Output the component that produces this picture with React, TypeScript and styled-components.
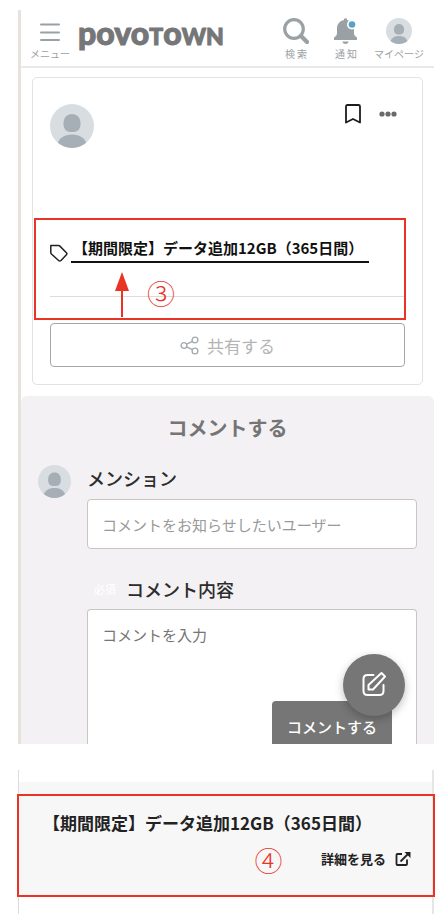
import React from 'react';
import styled, { createGlobalStyle } from 'styled-components';

const red = '#e93325';

const GlobalStyle = createGlobalStyle`
  * { box-sizing: border-box; }
  body {
    margin: 0;
    background: #fff;
    color: #222;
    font-family: "Noto Sans CJK JP", "Noto Sans", sans-serif;
  }
  button, input, textarea { font-family: inherit; }
  button { cursor: pointer; }
`;

const Page = styled.main`
  display: flex;
  flex-direction: column;
  gap: 26px;
  padding: 10px 12px 0 18px;
`;

const Screen = styled.section`
  border-left: 3px solid #e5e3dc;
`;

const Header = styled.header`
  display: flex;
  align-items: flex-start;
  height: 58px;
  padding: 8px 10px 0 8px;
  border-bottom: 2px solid #e9e9e9;
`;

const NavButton = styled.button<{ $width: number }>`
  display: flex;
  flex-direction: column;
  align-items: center;
  gap: 3px;
  width: ${p => p.$width}px;
  padding: 0;
  border: 0;
  background: none;
  color: #9aa1a5;
  font-size: 10px;
  line-height: 14px;
  white-space: nowrap;
`;

const Nav = styled.nav`
  display: flex;
  gap: 6px;
  margin-left: auto;
`;

const Logo = styled.a`
  display: flex;
  align-items: baseline;
  margin-left: 7px;
  color: #757678;
  font-family: Lato, sans-serif;
  font-size: 32px;
  font-weight: 900;
  line-height: 30px;
  text-decoration: none;
  -webkit-text-stroke: 1px #757678;
`;

const LogoCaps = styled.span`
  font-size: 23px;
`;

const Card = styled.article`
  margin: 9px 11px 11px;
  padding: 26px 17px 17px;
  border: 1px solid #e2e2e2;
  border-radius: 5px;
`;

const CardTop = styled.div`
  display: flex;
  align-items: flex-start;
  height: 139px;
`;

const CardActions = styled.div`
  display: flex;
  align-items: center;
  gap: 18px;
  margin: 0 8px 0 auto;
`;

const IconButton = styled.button`
  display: flex;
  padding: 0;
  border: 0;
  background: none;
`;

const TagRow = styled.div`
  position: relative;
  display: flex;
  align-items: flex-end;
  gap: 3px;
  height: 54px;
  padding-bottom: 33px;
  border-bottom: 1px solid #dcdcdc;
`;

const TagLink = styled.a`
  padding: 0 6px 0 2px;
  border-bottom: 2px solid #111;
  color: #111;
  font-size: 15px;
  font-weight: 700;
  line-height: 26px;
  white-space: nowrap;
  text-decoration: none;
`;

const TagFrame = styled.div`
  position: absolute;
  inset: -25px -1px -24px -16px;
  border: 2px solid ${red};
  pointer-events: none;
`;

const Marker = styled.span<{ $left: string; $top: number }>`
  position: absolute;
  left: ${p => p.$left};
  top: ${p => p.$top}px;
  color: ${red};
  font-size: 28px;
  font-weight: 300;
  line-height: 32px;
`;

const ArrowUp = styled.svg`
  position: absolute;
  left: 64px;
  top: 27px;
`;

const ShareButton = styled.button`
  display: flex;
  align-items: center;
  justify-content: center;
  gap: 8px;
  width: 100%;
  height: 44px;
  margin-top: 26px;
  border: 1px solid #a6a6a6;
  border-radius: 4px;
  background: #fff;
  color: #b5b5b5;
  font-size: 17px;
`;

const Comments = styled.section`
  padding: 18px 17px 0;
  border-radius: 6px 6px 0 0;
  background: #f3f1f3;
`;

const Title = styled.h2`
  margin: 0 0 22px;
  color: #757575;
  font-size: 20px;
  font-weight: 700;
  line-height: 28px;
  text-align: center;
`;

const FormRow = styled.div`
  display: flex;
  align-items: flex-start;
  gap: 16px;
  padding-top: 1px;
`;

const Form = styled.form`
  position: relative;
  flex: 1;
  min-width: 0;
`;

const Label = styled.label`
  display: flex;
  align-items: center;
  gap: 10px;
  color: #2c2c2c;
  font-size: 18px;
  font-weight: 500;
  line-height: 26px;
`;

const Required = styled.span`
  padding-left: 7px;
  color: #fff;
  font-size: 11px;
`;

const TextInput = styled.input`
  display: block;
  width: 100%;
  height: 50px;
  margin: 8px 0 27px;
  padding: 0 14px;
  border: 1px solid #c9c6c2;
  border-radius: 4px;
  background: #fff;
  font-size: 15px;
  &::placeholder { color: #999; }
`;

const TextArea = styled.textarea`
  display: block;
  width: 100%;
  height: 135px;
  margin-top: 7px;
  padding: 13px 14px;
  border: 1px solid #c9c6c2;
  border-bottom: 0;
  border-radius: 4px 4px 0 0;
  background: #fff;
  font-size: 15px;
  line-height: 24px;
  resize: none;
  &::placeholder { color: #757575; }
`;

const Submit = styled.button`
  position: absolute;
  right: 25px;
  bottom: 0;
  height: 43px;
  padding: 8px 15px 0;
  border: 0;
  border-radius: 4px 4px 0 0;
  background: #767676;
  color: #fff;
  font-size: 15px;
  font-weight: 500;
  line-height: 26px;
`;

const Compose = styled.button`
  position: absolute;
  right: 12px;
  bottom: 28px;
  display: flex;
  align-items: center;
  justify-content: center;
  width: 62px;
  height: 62px;
  padding: 0 0 2px;
  border: 0;
  border-radius: 50%;
  background: #767676;
  box-shadow: 0 3px 8px rgba(0, 0, 0, 0.25);
`;

const DetailScreen = styled.section`
  position: relative;
  padding: 12px 0 18px;
  border-left: 1px solid #dcdcdc;
  border-right: 2px solid #e6e6e6;
`;

const DetailPanel = styled.div`
  padding: 27px 21px 27px 24px;
  background: #f7f7f7;
`;

const DetailTitle = styled.h3`
  margin: 0;
  font-size: 17px;
  font-weight: 700;
  line-height: 28px;
  white-space: nowrap;
`;

const DetailLink = styled.a`
  display: flex;
  align-items: center;
  justify-content: flex-end;
  gap: 9px;
  margin-top: 12px;
  color: #222;
  font-size: 13px;
  font-weight: 700;
  line-height: 20px;
  text-decoration: none;
`;

const DetailFrame = styled.div`
  position: absolute;
  inset: 24px -3px 17px -2px;
  border: 2px solid ${red};
  pointer-events: none;
`;

function Avatar({ size }: { size: number }) {
  const id = `avatar-${size}`;
  return (
    <svg width={size} height={size} viewBox="0 0 44 44" aria-hidden="true">
      <clipPath id={id}><circle cx="22" cy="22" r="22" /></clipPath>
      <g clipPath={`url(#${id})`}>
        <rect width="44" height="44" fill="#d7dde0" />
        <path d="M22 10c5 0 8.500 3.500 8.500 9.500S28 28 22 28s-8.500-2.500-8.500-8.500S17 10 22 10z" fill="#a7afb6" />
        <path d="M7 41c2-7 7-10.500 15-10.500S35 34 37 41v3H7z" fill="#a7afb6" />
      </g>
    </svg>
  );
}

const MenuIcon = () => (
  <svg width="26" height="26" viewBox="0 0 26 26" stroke="#9aa1a5" strokeWidth="2" strokeLinecap="round">
    <path d="M4 6.500h18M4 14.500h18M4 22h18" />
  </svg>
);

const SearchIcon = () => (
  <svg width="26" height="26" viewBox="0 0 26 26" fill="none" stroke="#9aa1a5">
    <circle cx="11" cy="11" r="9.300" strokeWidth="3.200" />
    <path d="M18 18l6 6" strokeWidth="4.200" strokeLinecap="round" />
  </svg>
);

const BellIcon = () => (
  <svg width="26" height="26" viewBox="0 0 26 26" fill="#9aa1a5">
    <path d="M11 2V.5h3V2c4.500.8 7 4.200 7 8.500v4.500c0 2 .7 3 3 4.500v2.500h-23v-2.500c2.300-1.500 3-2.500 3-4.500v-4.500C4 6.200 6.500 2.800 11 2z" />
    <path d="M9.500 23.500h6c0 1.500-1.200 2.500-3 2.500s-3-1-3-2.500z" />
    <circle cx="19" cy="6.500" r="5" fill="#fff" />
    <circle cx="19" cy="6.500" r="3.300" fill="#58a2c8" />
  </svg>
);

const BookmarkIcon = () => (
  <svg width="16" height="20" viewBox="0 0 16 20" fill="none" stroke="#1c1c1c" strokeWidth="1.800" strokeLinejoin="round">
    <path d="M1 2.500Q1 1 2.500 1h11Q15 1 15 2.500V18.500L8 15 1 18.500z" />
  </svg>
);

const MoreIcon = () => (
  <svg width="18" height="6" viewBox="0 0 18 6" fill="#696969">
    <circle cx="3" cy="3" r="2.600" /><circle cx="9" cy="3" r="2.600" /><circle cx="15" cy="3" r="2.600" />
  </svg>
);

const TagIcon = () => (
  <svg width="18" height="19" viewBox="0 0 18 19" fill="none" stroke="#222" strokeWidth="1.500" strokeLinejoin="round">
    <path d="M.8 1.500h7.700q.8 0 1.400.6l6.500 6.600q1 1 0 2L11 16.500q-1.200 1.200-2.400 0L1.400 10Q.8 9.500.8 8.700z" />
  </svg>
);

const ShareIcon = () => (
  <svg width="19" height="19" viewBox="0 0 19 19" fill="none" stroke="#a5aaad" strokeWidth="1.400">
    <circle cx="4" cy="9.500" r="2.900" /><circle cx="15" cy="4" r="2.900" /><circle cx="15" cy="15" r="2.900" />
    <path d="M6.600 8.200l5.800-2.900M6.600 10.800l5.800 2.900" />
  </svg>
);

const EditIcon = () => (
  <svg width="26" height="26" viewBox="0 0 26 26" fill="none" stroke="#fff" strokeWidth="2" strokeLinecap="round" strokeLinejoin="round">
    <path d="M12.500 4H6.500Q2.500 4 2.500 8v12q0 4 4 4h12q4 0 4-4v-6" />
    <path d="M20.500 2L24 5.500 12 18.500H7.500v-4.500z" />
  </svg>
);

const ExternalIcon = () => (
  <svg width="16" height="14" viewBox="0 0 16 14" fill="none" stroke="#222" strokeWidth="1.800">
    <path d="M7 2H2.500Q1.500 2 1.500 3v9q0 1 1 1h8.500q1 0 1-1V7.500" />
    <path d="M5.500 9.500L13.500 1.500" />
    <path d="M9.500 0H15.500V6z" fill="#222" stroke="none" />
  </svg>
);

export default function App() {
  return (
    <>
      <GlobalStyle />
      <Page>
        <Screen>
          <Header>
            <NavButton $width={42} type="button"><MenuIcon />メニュー</NavButton>
            <Logo href="#" aria-label="povoTOWN">povo<LogoCaps>T</LogoCaps>o<LogoCaps>WN</LogoCaps></Logo>
            <Nav>
              <NavButton $width={44} type="button"><SearchIcon />検 索</NavButton>
              <NavButton $width={44} type="button"><BellIcon />通 知</NavButton>
              <NavButton $width={50} type="button"><Avatar size={26} />マイページ</NavButton>
            </Nav>
          </Header>

          <Card>
            <CardTop>
              <Avatar size={44} />
              <CardActions>
                <IconButton type="button" aria-label="ブックマーク"><BookmarkIcon /></IconButton>
                <IconButton type="button" aria-label="その他"><MoreIcon /></IconButton>
              </CardActions>
            </CardTop>
            <TagRow>
              <TagIcon />
              <TagLink href="#detail">【期間限定】データ追加12GB（365日間）</TagLink>
              <TagFrame />
              <ArrowUp width="16" height="48" viewBox="0 0 16 48" aria-hidden="true">
                <path d="M8 2l7 19H1z" fill={red} />
                <path d="M8 20v27" stroke={red} strokeWidth="2" />
              </ArrowUp>
              <Marker $left="97px" $top={34}>③</Marker>
            </TagRow>
            <ShareButton type="button"><ShareIcon />共有する</ShareButton>
          </Card>

          <Comments>
            <Title>コメントする</Title>
            <FormRow>
              <Avatar size={33} />
              <Form onSubmit={e => e.preventDefault()}>
                <Label htmlFor="mention">メンション</Label>
                <TextInput id="mention" placeholder="コメントをお知らせしたいユーザー" />
                <Label htmlFor="comment"><Required>必須</Required>コメント内容</Label>
                <TextArea id="comment" placeholder="コメントを入力" />
                <Submit type="submit">コメントする</Submit>
                <Compose type="button" aria-label="投稿を作成"><EditIcon /></Compose>
              </Form>
            </FormRow>
          </Comments>
        </Screen>

        <DetailScreen id="detail">
          <DetailPanel>
            <DetailTitle>【期間限定】データ追加12GB（365日間）</DetailTitle>
            <DetailLink href="#">詳細を見る<ExternalIcon /></DetailLink>
          </DetailPanel>
          <DetailFrame />
          <Marker $left="57%" $top={74}>④</Marker>
        </DetailScreen>
      </Page>
    </>
  );
}
